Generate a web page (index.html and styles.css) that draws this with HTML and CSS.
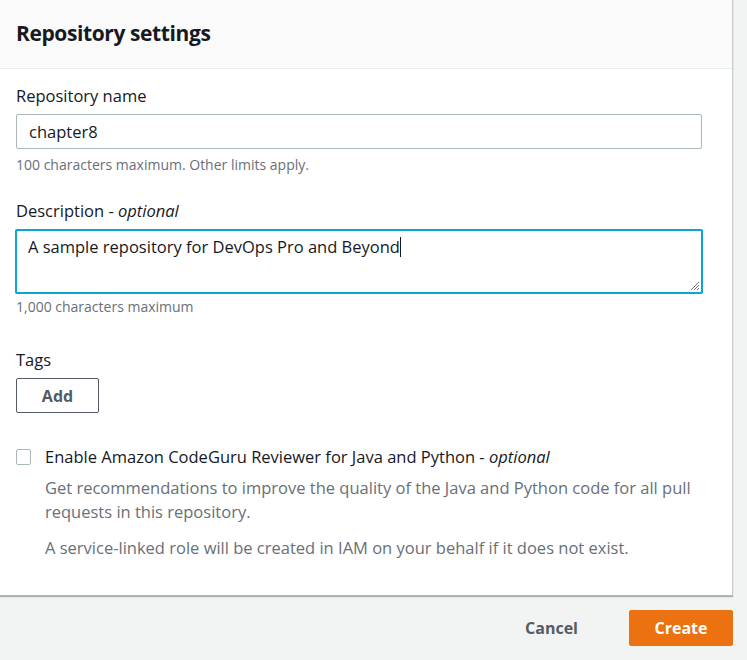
FILE: index.html
```html
<!DOCTYPE html>
<html>
<head>
<meta charset="utf-8">
<link rel="stylesheet" href="styles.css">
</head>
<body>
<div class="page">
  <div class="card">
    <div class="card-header"><h2>Repository settings</h2></div>
    <div class="card-body">
      <div class="field">
        <div class="label">Repository name</div>
        <div class="input">chapter8</div>
        <div class="hint">100 characters maximum. Other limits apply.</div>
      </div>
      <div class="field field-desc">
        <div class="label">Description - <em>optional</em></div>
        <div class="textarea">A sample repository for DevOps Pro and Beyond<span class="caret"></span>
          <svg class="grip" width="12" height="12" viewBox="0 0 12 12"><path d="M11 3 L3 11 M11 6 L6 11 M11 9 L9 11" stroke="#777" stroke-width="1"/></svg>
        </div>
        <div class="hint hint-desc">1,000 characters maximum</div>
      </div>
      <div class="field field-tags">
        <div class="label">Tags</div>
        <button class="btn-add">Add</button>
      </div>
      <div class="check-row">
        <span class="checkbox"></span>
        <div class="check-text">
          <div class="check-label">Enable Amazon CodeGuru Reviewer for Java and Python - <em>optional</em></div>
          <div class="check-desc">Get recommendations to improve the quality of the Java and Python code for all pull requests in this repository.</div>
          <div class="check-desc second">A service-linked role will be created in IAM on your behalf if it does not exist.</div>
        </div>
      </div>
    </div>
  </div>
  <div class="footer">
    <button class="btn-cancel">Cancel</button>
    <button class="btn-create">Create</button>
  </div>
</div>
</body>
</html>
```
FILE: styles.css
```css
* { box-sizing: border-box; }
html, body { margin: 0; padding: 0; }
body {
  background: #f2f3f3;
  font-family: "Open Sans", "Noto Sans", sans-serif;
  color: #16191f;
  width: 747px;
  height: 660px;
  overflow: hidden;
}
.page { width: 747px; }
.card {
  width: 733px;
  background: #fff;
  border-right: 1px solid #c6ccd1;
  border-bottom: 1px solid #aab7b8;
  box-shadow: 0 1px 1px rgba(0,28,36,0.3);
}
.card-header {
  height: 69px;
  background: #fafafa;
  border-bottom: 1px solid #eaeded;
  display: flex;
  align-items: center;
  padding: 0 16px 2px;
}
.card-header h2 {
  margin: 0;
  font-size: 21px;
  font-weight: 700;
  letter-spacing: -0.4px;
}
.card-body { padding: 16px 30px 35px 16px; }
.label {
  font-size: 16.5px;
  line-height: 22px;
  margin-bottom: 7px;
}
.label em { font-style: italic; }
.input {
  height: 35px;
  border: 1px solid #aab7b8;
  border-radius: 2px;
  padding: 0 12px;
  font-size: 16.5px;
  line-height: 33px;
}
.hint {
  font-size: 14px;
  color: #687078;
  line-height: 18px;
  margin-top: 7px;
}
.hint-desc { margin-top: 4px; }
.field-desc { margin-top: 26px; }
.textarea {
  position: relative;
  height: 65px;
  border: 2px solid #0aa5d3;
  border-radius: 2px;
  padding: 2px 11px;
  font-size: 16.5px;
  line-height: 28px;
  margin-left: -1px;
  margin-right: -1px;
}
.caret {
  display: inline-block;
  width: 1px;
  height: 20px;
  background: #16191f;
  vertical-align: -4px;
}
.grip { position: absolute; right: 1px; bottom: 1px; }
.field-tags { margin-top: 33px; }
.btn-add {
  width: 83px;
  height: 35px;
  background: #fff;
  border: 1px solid #545b64;
  border-radius: 2px;
  font-family: inherit;
  font-weight: 700;
  font-size: 16px;
  color: #545b64;
  padding: 0;
}
.check-row {
  display: flex;
  margin-top: 33px;
  gap: 14px;
}
.checkbox {
  flex: none;
  width: 15px;
  height: 16px;
  border: 1px solid #aab7b8;
  border-radius: 2px;
  margin-top: 3px;
}
.check-label {
  font-size: 16.5px;
  line-height: 22px;
}
.check-desc {
  font-size: 16.5px;
  line-height: 24px;
  color: #687078;
  margin-top: 8px;
}
.check-desc.second { margin-top: 12px; }
.footer {
  display: flex;
  justify-content: flex-end;
  align-items: center;
  width: 733px;
  padding-top: 14px;
  gap: 31px;
}
button { cursor: pointer; }
.btn-cancel {
  background: none;
  border: none;
  font-family: inherit;
  font-weight: 700;
  font-size: 16px;
  color: #545b64;
  padding: 0 20px;
  height: 35px;
}
.btn-create {
  width: 104px;
  height: 36px;
  background: #ec7211;
  border: 1px solid #ec7211;
  border-radius: 2px;
  color: #fff;
  font-family: inherit;
  font-weight: 700;
  font-size: 16px;
  padding: 0;
}
```
